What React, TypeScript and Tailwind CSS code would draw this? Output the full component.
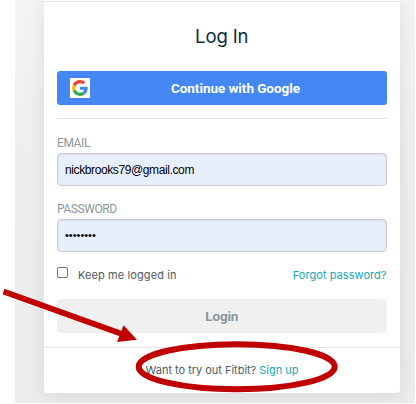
function GoogleMark() {
  return (
    <span className="flex h-5 w-5 items-center justify-center bg-white">
      <svg viewBox="0 0 48 48" className="h-4 w-4">
        <path fill="#EA4335" d="M24 9.5c3.54 0 6.71 1.22 9.21 3.6l6.85-6.85C35.9 2.38 30.47 0 24 0 14.62 0 6.51 5.38 2.56 13.22l7.98 6.19C12.43 13.72 17.74 9.5 24 9.5z" />
        <path fill="#4285F4" d="M46.98 24.55c0-1.57-.15-3.09-.38-4.55H24v9.02h12.94c-.58 2.96-2.26 5.48-4.78 7.18l7.73 6c4.51-4.18 7.09-10.36 7.09-17.65z" />
        <path fill="#FBBC05" d="M10.53 28.59c-.48-1.45-.76-2.99-.76-4.59s.27-3.14.76-4.59l-7.98-6.19C.92 16.46 0 20.12 0 24c0 3.88.92 7.54 2.56 10.78l7.97-6.19z" />
        <path fill="#34A853" d="M24 48c6.48 0 11.93-2.13 15.89-5.81l-7.73-6c-2.15 1.45-4.92 2.3-8.16 2.3-6.26 0-11.57-4.22-13.47-9.91l-7.98 6.19C6.51 42.62 14.62 48 24 48z" />
      </svg>
    </span>
  );
}

function Annotation() {
  return (
    <svg className="pointer-events-none absolute top-0 left-0 h-[404px] w-[416px]" viewBox="0 0 416 404">
      <path d="M3.5 291.5 122 334" stroke="#c00000" strokeWidth="5.6" />
      <path d="M123.5 325.2 137 339.8 117 342Z" fill="#c00000" />
      <ellipse cx="236.7" cy="366.7" rx="98" ry="22.5" fill="none" stroke="#c00000" strokeWidth="6" />
    </svg>
  );
}

const field =
  "block h-[33px] w-full rounded border border-[#c9ced5] bg-[#e8effc] px-[7px] text-black shadow-[inset_0_1px_2px_rgba(0,0,0,0.08)] outline-none";

export default function App() {
  return (
    <div className="relative h-[404px] w-[416px] overflow-hidden bg-white font-['Liberation_Sans',sans-serif]">
      <div className="ml-[15px] h-[403px] w-[400px] overflow-hidden bg-gradient-to-b from-[#f4f4f4] via-[#eeeeee] via-40% to-[#ececec] pl-[29px]">
        <main className="flex h-[393px] w-[355.5px] flex-col rounded-b border-t border-white bg-white shadow-[0_2px_18px_rgba(0,0,0,0.09)]">
          <div className="h-[347px] border-t border-b border-[#e4e5e6] px-[13px] pt-[22px]">
            <h1 className="h-[47px] text-center font-[Inter,sans-serif] text-[18.5px] leading-[25px] font-normal tracking-[-0.1px] text-[#0b2c3a]">
              Log In
            </h1>
            <button className="flex h-[34px] w-full items-center rounded-[3px] bg-[#4587f2] pl-[13px] text-white">
              <GoogleMark />
              <span className="ml-[81px] font-[Roboto,sans-serif] text-[13.5px] leading-4 font-bold tracking-[-0.05px] whitespace-nowrap">Continue with Google</span>
            </button>
            <hr className="mt-[13px] border-[#dfe2e4]" />
            <label className="mt-[18px] block h-4 font-[Roboto,sans-serif] text-[12px] leading-[13px] tracking-[-0.4px] text-[#8b979e]">EMAIL</label>
            <input className={field + " text-[12px] tracking-[-0.39px]"} defaultValue="nickbrooks79@gmail.com" />
            <label className="mt-[17px] block h-4 font-[Roboto,sans-serif] text-[12px] leading-[13px] tracking-[-0.4px] text-[#8b979e]">PASSWORD</label>
            <input className={field + " pb-px text-[11px]"} type="password" defaultValue="password" />
            <div className="mt-[9px] flex h-[38px] items-start justify-between font-[Inter,sans-serif] text-[11px] leading-[14px] text-[#4e5a61]">
              <label className="flex pt-[7px]">
                <span className="mt-[-1px] mr-[10px] h-[11px] w-[11px] rounded-[2px] border border-[#6f7377] bg-white" />
                <span className="tracking-[0.1px]">Keep me logged in</span>
              </label>
              <a className="pt-[7px] tracking-[0.05px] text-[#15a8b4]">Forgot password?</a>
            </div>
            <button className="block h-[34px] w-full rounded bg-[#f0f0f0] font-[Roboto,sans-serif] text-[13.5px] font-bold tracking-[-0.2px] text-[#8b979e]">Login</button>
          </div>
          <p className="pt-[15px] pl-[101.5px] font-[Inter,sans-serif] text-[11px] leading-[14px] tracking-[-0.02px] whitespace-nowrap text-[#4e5a61]">
            Want to try out Fitbit? <a className="text-[#15a8b4]">Sign up</a>
          </p>
        </main>
      </div>
      <Annotation />
    </div>
  );
}
